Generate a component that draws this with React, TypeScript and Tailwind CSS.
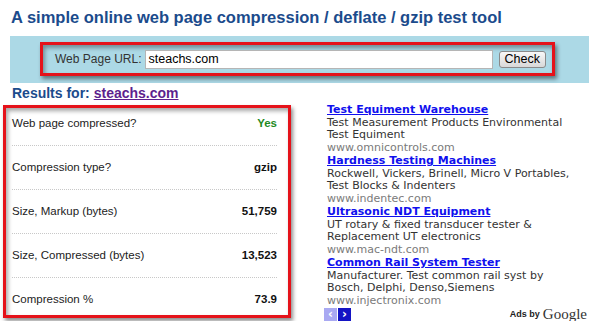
import React from "react"

const rows = [
  { label: "Web page compressed?", value: "Yes", green: true },
  { label: "Compression type?", value: "gzip" },
  { label: "Size, Markup (bytes)", value: "51,759" },
  { label: "Size, Compressed (bytes)", value: "13,523" },
  { label: "Compression %", value: "73.9" },
]

const ads = [
  {
    title: "Test Equiment Warehouse",
    lines: ["Test Measurement Products Environmental", "Test Equiment"],
    url: "www.omnicontrols.com",
  },
  {
    title: "Hardness Testing Machines",
    lines: ["Rockwell, Vickers, Brinell, Micro V Portables,", "Test Blocks & Indenters"],
    url: "www.indentec.com",
  },
  {
    title: "Ultrasonic NDT Equipment",
    lines: ["UT rotary & fixed transducer tester &", "Replacement UT electronics"],
    url: "www.mac-ndt.com",
  },
  {
    title: "Common Rail System Tester",
    lines: ["Manufacturer. Test common rail syst by", "Bosch, Delphi, Denso,Siemens"],
    url: "www.injectronix.com",
  },
]

// annotation-style red rectangle with drop shadow
const redBox =
  "border-[3px] border-[#e5121a] shadow-[2px_3px_4px_rgba(0,0,0,0.45),inset_2px_3px_4px_rgba(0,0,0,0.35)]"

export default function App() {
  return (
    <div className="w-[600px] h-[321px] overflow-hidden bg-white font-['Liberation_Sans',Arial,sans-serif] text-[#222]">
      <h1 className="pl-[11px] pt-[6px] text-[16.5px] leading-[22px] font-bold text-[#1b4b8c] whitespace-nowrap">
        A simple online web page compression / deflate / gzip test tool
      </h1>

      <div className="ml-[10px] mt-[8px] w-[579px] h-[47px] bg-[#acd9e6] pl-[30px] pt-[6px]">
        <div className={`w-[515px] h-[34px] flex items-center pl-[12px] ${redBox}`}>
          <span className="text-[12px] text-[#333] whitespace-nowrap">Web Page URL:</span>
          <div className="ml-[3px] shrink-0 w-[348px] h-[19px] bg-white border border-[#b5b5b5] flex items-center px-[3px] text-[12.5px] text-black">
            steachs.com
          </div>
          <button className="ml-[6px] shrink-0 h-[17px] px-[5px] rounded-[3px] border border-[#8a8a8a] bg-gradient-to-b from-[#f8f8f8] to-[#d8d8d8] text-[12.5px] leading-[15px] text-black">
            Check
          </button>
        </div>
      </div>

      <div className="pl-[12px] mt-[1px] text-[14px] leading-[18px] font-bold text-[#1b4b8c]">
        Results for: <span className="text-[#5c1f8e] underline">steachs.com</span>
      </div>

      <div className="flex mt-[3px]">
        <div className={`ml-[3px] w-[288px] h-[213px] bg-white px-[6px] ${redBox}`}>
          <div className="pr-[5px]">
            {rows.map((r, i) => (
              <div
                key={r.label}
                className={`flex items-center justify-between text-[11.5px] ${
                  i === 0 ? "h-[38px] pb-[6px]" : i === rows.length - 1 ? "h-[36px] pt-[8px]" : "h-[44px]"
                } ${i < rows.length - 1 ? "border-b border-dotted border-[#c8c8c8]" : ""}`}
              >
                <span>{r.label}</span>
                <span className={`font-bold ${r.green ? "text-[#1f8a1f]" : "text-[#111]"}`}>{r.value}</span>
              </div>
            ))}
          </div>
        </div>

        <div className="ml-[36px] w-[262px] font-['DejaVu_Sans',Verdana,sans-serif] text-[11px] -mt-[1px]">
          {ads.map((a) => (
            <div key={a.title} className="h-[51px] leading-[12.6px]">
              <div className="font-bold text-[#1010ee] underline">{a.title}</div>
              {a.lines.map((l) => (
                <div key={l} className="text-[#333]">
                  {l}
                </div>
              ))}
              <div className="text-[#7a7a7a]">{a.url}</div>
            </div>
          ))}
          <div className="flex items-center justify-between pr-[2px] -mt-[1px] h-[14px]">
            <div className="flex gap-[1px] -ml-[3px]">
              <span className="w-[13px] h-[13px] bg-[#a9a9f2] text-white text-[12px] leading-[13px] font-bold flex items-center justify-center">
                ‹
              </span>
              <span className="w-[13px] h-[13px] bg-[#1414c4] text-white text-[12px] leading-[13px] font-bold flex items-center justify-center">
                ›
              </span>
            </div>
            <div className="flex items-center gap-[3px]">
              <span className="font-['Liberation_Sans',Arial,sans-serif] text-[9px] leading-[10px] font-bold text-[#222]">
                Ads by
              </span>
              <span className="font-['Liberation_Serif','Times_New_Roman',serif] text-[15px] leading-[13px] text-[#333]">
                Google
              </span>
            </div>
          </div>
        </div>
      </div>
    </div>
  )
}
